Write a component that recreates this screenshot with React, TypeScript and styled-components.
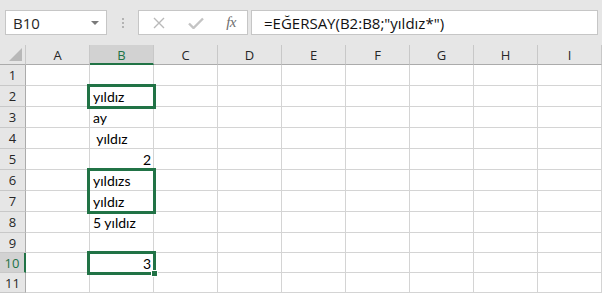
import * as React from "react";
import styled, { createGlobalStyle } from "styled-components";

const GREEN = "#217346";
const GRID = "#d4d4d4";

const GlobalStyle = createGlobalStyle`
  html, body {
    margin: 0;
    padding: 0;
    background: #e6e6e6;
  }
  * {
    box-sizing: border-box;
  }
`;

const columns = ["A", "B", "C", "D", "E", "F", "G", "H", "I"];

// B column contents, by row number
const cellsB: Record<number, { text: string; align?: "right" }> = {
  2: { text: "yıldız" },
  3: { text: "ay" },
  4: { text: "\u00a0yıldız" },
  5: { text: "2", align: "right" },
  6: { text: "yıldızs" },
  7: { text: "yıldız" },
  8: { text: "5 yıldız" },
  10: { text: "3", align: "right" },
};

// selection boxes, keyed by the top row, value = rows spanned
const boxes: Record<number, number> = { 2: 1, 6: 2, 10: 1 };

const rowHeights = [21, 21, 21, 21, 21, 21, 21, 21, 20, 20, 20];

export default function App() {
  return (
    <>
      <GlobalStyle />
      <Window>
        <FormulaBar>
          <NameBox>
            <span>B10</span>
            <DropArrow />
          </NameBox>
          <Grip>
            <i />
            <i />
            <i />
          </Grip>
          <FxButtons>
            <svg width="12" height="12" viewBox="0 0 12 12">
              <path d="M1 1 L11 11 M11 1 L1 11" stroke="#b9b9b9" strokeWidth="1.4" fill="none" />
            </svg>
            <svg width="16" height="12" viewBox="0 0 16 12">
              <path d="M1 6.5 L5.5 11 L15 1.5" stroke="#c4c4c4" strokeWidth="2.4" fill="none" />
            </svg>
            <FxLabel>fx</FxLabel>
          </FxButtons>
          <FormulaInput>=EĞERSAY(B2:B8;"yıldız*")</FormulaInput>
        </FormulaBar>

        <Sheet>
          <Corner>
            <svg width="13" height="13" viewBox="0 0 13 13">
              <polygon points="13,0 13,13 0,13" fill="#b8b8b8" />
            </svg>
          </Corner>
          {columns.map((c) => (
            <ColHeader key={c} $selected={c === "B"}>
              {c}
            </ColHeader>
          ))}
          {rowHeights.map((h, i) => {
            const row = i + 1;
            return (
              <React.Fragment key={row}>
                <RowHeader $selected={row === 10}>{row}</RowHeader>
                {columns.map((c) => {
                  const data = c === "B" ? cellsB[row] : undefined;
                  const span = c === "B" ? boxes[row] : undefined;
                  let boxHeight = 0;
                  if (span) {
                    for (let k = 0; k < span; k++) boxHeight += rowHeights[i + k];
                  }
                  return (
                    <Cell key={c} $align={data?.align}>
                      {data?.text}
                      {span ? (
                        <Selection style={{ height: boxHeight + 4 }}>
                          {row === 10 && <FillHandle />}
                        </Selection>
                      ) : null}
                    </Cell>
                  );
                })}
              </React.Fragment>
            );
          })}
        </Sheet>
      </Window>
    </>
  );
}

const Window = styled.div`
  width: 602px;
  height: 293px;
  overflow: hidden;
  background: #e6e6e6;
  display: flex;
  flex-direction: column;
`;

const FormulaBar = styled.div`
  height: 45px;
  flex: none;
  display: flex;
  align-items: flex-start;
  padding: 10px 4px 0 5px;
`;

const NameBox = styled.div`
  width: 102px;
  height: 25px;
  background: #ffffff;
  border: 1px solid #c6c6c6;
  display: flex;
  align-items: center;
  justify-content: space-between;
  padding: 0 7px 0 7px;
  font-family: "Open Sans", "Liberation Sans", sans-serif;
  font-size: 15px;
  color: #262626;
`;

const DropArrow = styled.span`
  width: 0;
  height: 0;
  border-left: 4px solid transparent;
  border-right: 4px solid transparent;
  border-top: 4px solid #7a7a7a;
`;

const Grip = styled.div`
  width: 31px;
  height: 25px;
  display: flex;
  flex-direction: column;
  align-items: center;
  justify-content: center;
  gap: 2px;
  i {
    width: 2px;
    height: 2px;
    background: #b3b3b3;
  }
`;

const FxButtons = styled.div`
  width: 110px;
  height: 25px;
  background: #ffffff;
  border: 1px solid #c6c6c6;
  display: flex;
  align-items: center;
  justify-content: space-between;
  padding: 0 11px 0 14px;
`;

const FxLabel = styled.span`
  font-family: "Liberation Serif", serif;
  font-style: italic;
  font-size: 15px;
  color: #6e6e6e;
  letter-spacing: -0.5px;
`;

const FormulaInput = styled.div`
  flex: 1;
  height: 25px;
  margin-left: 3px;
  background: #ffffff;
  border: 1px solid #c6c6c6;
  display: flex;
  align-items: center;
  padding-left: 12px;
  font-family: "Open Sans", "Liberation Sans", sans-serif;
  font-size: 15px;
  color: #111111;
  white-space: nowrap;
`;

const Sheet = styled.div`
  display: grid;
  grid-template-columns: 26px repeat(9, 64px);
  grid-template-rows: 20px repeat(8, 21px) repeat(3, 20px);
  background: #ffffff;
`;

const Corner = styled.div`
  background: #e6e6e6;
  border-right: 1px solid #c8c8c8;
  border-bottom: 1px solid #ababab;
  display: flex;
  align-items: flex-end;
  justify-content: flex-end;
  padding: 0 3px 3px 0;
`;

const ColHeader = styled.div<{ $selected?: boolean }>`
  background: ${(p) => (p.$selected ? "#d2d2d2" : "#e6e6e6")};
  border-right: 1px solid #c8c8c8;
  border-bottom: ${(p) => (p.$selected ? `2px solid ${GREEN}` : "1px solid #ababab")};
  display: flex;
  align-items: center;
  justify-content: center;
  font-family: "Open Sans", "Liberation Sans", sans-serif;
  font-size: 13px;
  color: ${(p) => (p.$selected ? GREEN : "#262626")};
  padding-top: 1px;
`;

const RowHeader = styled.div<{ $selected?: boolean }>`
  background: ${(p) => (p.$selected ? "#d2d2d2" : "#e6e6e6")};
  border-right: ${(p) => (p.$selected ? `2px solid ${GREEN}` : "1px solid #ababab")};
  border-bottom: 1px solid #c8c8c8;
  display: flex;
  align-items: center;
  justify-content: center;
  font-family: "Open Sans", "Liberation Sans", sans-serif;
  font-size: 13px;
  color: ${(p) => (p.$selected ? GREEN : "#262626")};
`;

const Cell = styled.div<{ $align?: "right" }>`
  position: relative;
  border-right: 1px solid ${GRID};
  border-bottom: 1px solid ${GRID};
  display: flex;
  align-items: center;
  justify-content: ${(p) => (p.$align === "right" ? "flex-end" : "flex-start")};
  padding: 1px 2px 0 3px;
  font-family: Lato, "Liberation Sans", sans-serif;
  font-size: 14px;
  color: #000000;
  white-space: pre;
`;

const Selection = styled.div`
  position: absolute;
  top: -2px;
  left: -3px;
  width: 69px;
  border: 3px solid ${GREEN};
  z-index: 2;
  pointer-events: none;
`;

const FillHandle = styled.div`
  position: absolute;
  right: -5px;
  bottom: -5px;
  width: 7px;
  height: 7px;
  background: ${GREEN};
  border: 1px solid #ffffff;
`;
